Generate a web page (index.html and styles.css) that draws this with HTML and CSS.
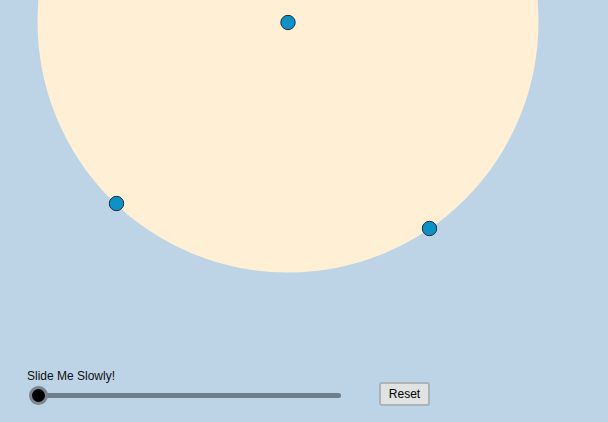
FILE: index.html
```html
<!DOCTYPE html>
<html>
<head>
<meta charset="utf-8">
<link rel="stylesheet" href="styles.css">
</head>
<body>
<div class="stage">
  <svg class="canvas" width="608" height="422" viewBox="0 0 608 422">
    <circle cx="288" cy="22" r="250.5" fill="#fff0d5"/>
    <circle cx="288" cy="22.5" r="7.2" fill="#0b93c9" stroke="#1b2a33" stroke-width="1"/>
    <circle cx="116.5" cy="203.5" r="7.2" fill="#0b93c9" stroke="#1b2a33" stroke-width="1"/>
    <circle cx="429.5" cy="228.5" r="7.2" fill="#0b93c9" stroke="#1b2a33" stroke-width="1"/>
  </svg>
  <div class="controls">
    <div class="slider">
      <div class="slider-label">Slide Me Slowly!</div>
      <div class="track"><span class="thumb"></span></div>
    </div>
    <button class="reset">Reset</button>
  </div>
</div>
</body>
</html>
```
FILE: styles.css
```css
html, body {
  margin: 0;
  padding: 0;
  background: #bdd4e7;
  overflow: hidden;
}
.stage {
  position: relative;
  width: 608px;
  height: 422px;
  font-family: "Liberation Sans", Arial, sans-serif;
}
.canvas {
  display: block;
}
.controls {
  position: absolute;
  left: 27px;
  top: 369px;
  display: flex;
  align-items: flex-start;
  gap: 38px;
}
.slider {
  display: flex;
  flex-direction: column;
  gap: 10px;
}
.slider-label {
  font-size: 12px;
  line-height: 14px;
  color: #111;
  white-space: nowrap;
}
.track {
  position: relative;
  margin-left: 11px;
  width: 303px;
  height: 5px;
  border-radius: 3px;
  background: #6f7e8b;
}
.thumb {
  position: absolute;
  left: -9.5px;
  top: -7px;
  width: 13px;
  height: 13px;
  border-radius: 50%;
  background: #000;
  border: 3px solid #7c858d;
}
.reset {
  width: 51px;
  height: 24px;
  margin-top: 13px;
  padding: 0;
  background: #e1e2e2;
  border: 2px solid #aab3ba;
  border-radius: 3px;
  font-family: "Liberation Sans", Arial, sans-serif;
  font-size: 12px;
  color: #000;
}
```
